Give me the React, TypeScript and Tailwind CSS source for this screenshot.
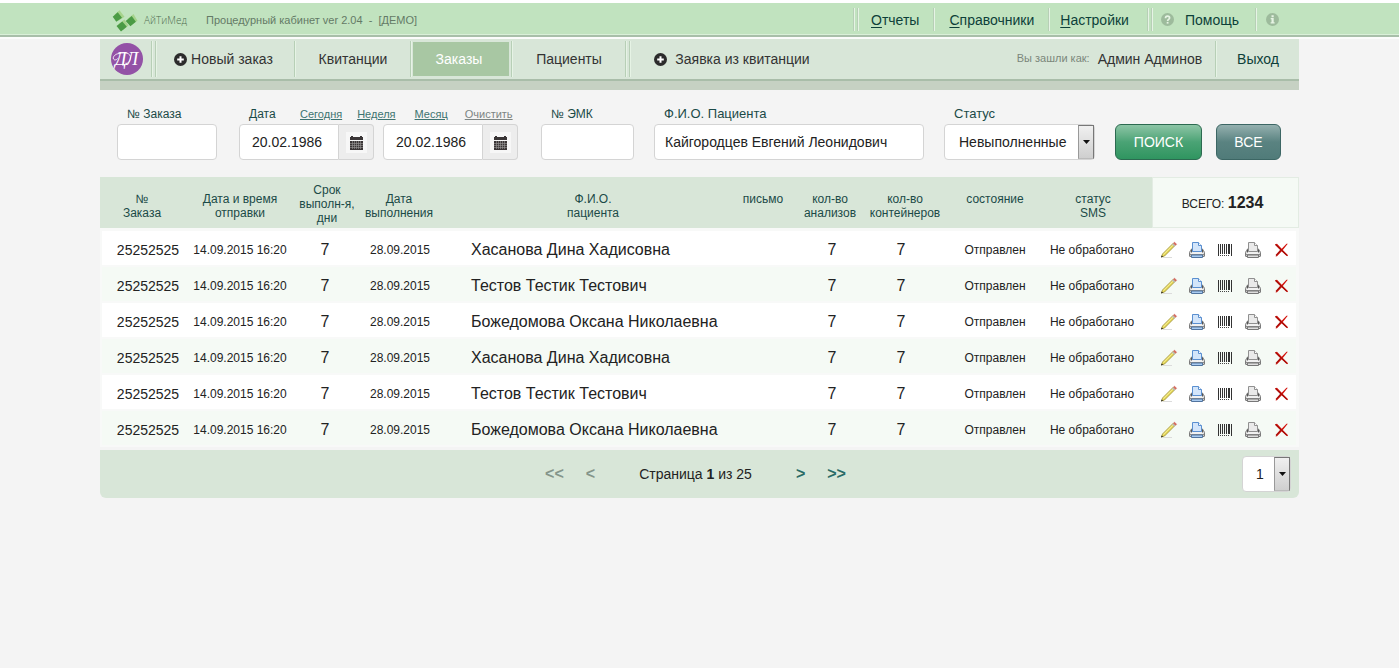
import { useState } from 'react';
import type { ReactNode } from 'react';
import { clsx } from 'clsx';

type Order = {
  id: number;
  number: string;
  sentAt: string;
  days: number;
  doneAt: string;
  patient: string;
  tests: number;
  containers: number;
  state: string;
  sms: string;
};

const patients = ['Хасанова Дина Хадисовна', 'Тестов Тестик Тестович', 'Божедомова Оксана Николаевна'];

const orders: Order[] = Array.from({ length: 6 }, (_, i) => ({
  id: i,
  number: '25252525',
  sentAt: '14.09.2015 16:20',
  days: 7,
  doneAt: '28.09.2015',
  patient: patients[i % 3],
  tests: 7,
  containers: 7,
  state: 'Отправлен',
  sms: 'Не обработано',
}));

function LogoIcon() {
  return (
    <svg width="26" height="22" viewBox="0 0 26 22" aria-hidden="true">
      <path d="M2.500 4.700 7.500.3l5 6.400-6 4zM15.500 9l6-5 4 6.700-6 4zM6.500 14l6-4.500 4 6-5.500 4.500z" fill="#a6d38c" />
      <path d="M.7 6.700 5.700 2.300l4.300 5.500-5.700 4zM13.700 11l6-5 4.200 5.700-5.500 4.500zM4.500 16l5.800-4.500 4.500 5.300L9 21.400z" fill="#4b9b45" />
    </svg>
  );
}

function Monogram() {
  return (
    <svg width="32" height="32" viewBox="0 0 32 32" aria-hidden="true">
      <circle cx="16" cy="16" r="16" fill="#9352a6" />
      <text x="4" y="22" fill="#fff" fontSize="18" fontStyle="italic" fontFamily="Liberation Serif, serif">Д</text>
      <text x="15" y="22" fill="#fff" fontSize="18" fontStyle="italic" fontFamily="Liberation Serif, serif">Л</text>
      <path d="M8 10.500C4 11 1.500 14 2.500 16c.8 1.500 3 1 4-.5M8 10.500c6-1.500 12-.5 11.500 4.500-.4 4-4 7-8.500 7" fill="none" stroke="#fff" strokeWidth=".9" />
    </svg>
  );
}

function PlusIcon() {
  return (
    <svg width="13" height="13" viewBox="0 0 13 13" aria-hidden="true">
      <circle cx="6.5" cy="6.5" r="6.5" fill="#2b2b2b" />
      <path d="M6.5 3.2v6.6M3.2 6.5h6.6" stroke="#fff" strokeWidth="2" />
    </svg>
  );
}

function HelpIcon() {
  return (
    <svg width="13" height="13" viewBox="0 0 13 13" aria-hidden="true">
      <circle cx="6.5" cy="6.5" r="6.5" fill="#9dbb9c" />
      <path d="M4.5 5.2c0-2.8 4.1-2.6 4.1-.2 0 1.5-2 1.3-2 3" fill="none" stroke="#e6f4e4" strokeWidth="1.7" />
      <path d="M5.7 8.9h1.8v1.7H5.7z" fill="#e6f4e4" />
    </svg>
  );
}

function InfoIcon() {
  return (
    <svg width="13" height="13" viewBox="0 0 13 13" aria-hidden="true">
      <circle cx="6.5" cy="6.5" r="6.5" fill="#9dbb9c" />
      <path d="M5.5 2.200h2.200v2H5.500zM4.700 5h3v4.300h.9v1.300H4.600V9.300h.9V6.200h-.8z" fill="#e6f4e4" />
    </svg>
  );
}

function CalendarIcon() {
  return (
    <svg width="21" height="21" viewBox="0 0 21 21" aria-hidden="true">
      <path d="M0 0h21v21H0z" fill="#f7f7f7" />
      <path d="M4 5h13v3H4zM5 4h2v2H5zM14 4h2v2h-2z" fill="#3a3536" />
      <path d="M4 9h13v9H4z" fill="#3a3536" />
      <path d="M4 11.500h13M4 13.500h13M4 15.500h13M6.500 9v8M8.500 9v8M10.500 9v8M12.500 9v8M14.500 9v8" stroke="#9b9899" strokeWidth=".6" />
    </svg>
  );
}

function PencilIcon() {
  return (
    <svg width="18" height="18" viewBox="0 0 18 18" aria-hidden="true">
      <path d="M3 16.500h9" stroke="#dcdcdc" />
      <path d="m1.500 16 1-3L13 2.500l2 2L4.500 15z" fill="#e9dc5c" stroke="#98892f" strokeWidth=".8" />
      <path d="M3.300 13.500 13.500 3.300" stroke="#f9f3a8" strokeWidth=".8" />
      <path d="m12.500 3 2.200 2.200" stroke="#b9b9b9" strokeWidth="1.400" />
      <path d="m13.500 2 1-.8 2 2-.9 1z" fill="#e0645a" stroke="#c1544b" strokeWidth=".6" />
      <path d="m1 16.500.7-2 1.400 1.300z" fill="#222" />
    </svg>
  );
}

function PrinterIcon({ blue }: { blue?: boolean }) {
  const edge = blue ? '#5a8fd0' : '#909090';
  return (
    <svg width="16" height="16" viewBox="0 0 16 16" aria-hidden="true">
      <path d="M1.500 8.500 3 6.500h10l1.500 2 1 2v3.500q0 .5-.5.5H1q-.5 0-.5-.5v-3.500z" fill="#c9c9c9" stroke="#7b7b7b" />
      <path d="M3.500 9.500v-9h6l3 3v6z" fill={blue ? '#d3e5fa' : '#eaeaea'} stroke={edge} />
      <path d="M9.500.5v3h3" fill="#fff" stroke={edge} />
      <path d="M1.500 10h13v2h-13z" fill="#f1f1f1" />
      <path d="M2.500 7.500v3M13.500 7.500v3" stroke="#555" />
      <path d="M1 12.500h14" stroke="#8c8c8c" />
      <path d="M2.500 13h11v2.500h-11z" fill={blue ? '#a9cbf0' : '#dedede'} stroke={blue ? '#51749f' : '#777'} />
    </svg>
  );
}

function BarcodeIcon() {
  return (
    <svg width="14" height="12" viewBox="0 0 14 12" aria-hidden="true">
      <path d="M0 0h1v12H0zM2 0h1v10H2zM4 0h1v10H4zM6 0h1v10H6zM8 0h1v10H8zM10 0h1v10h-1zM11 0h1v10h-1zM13 0h1v12h-1z" fill="#333" />
      <path d="M2 11h1v1H2zM4 11h1v1H4zM6 11h1v1H6zM8 11h1v1H8zM10 11h1v1h-1z" fill="#444" />
    </svg>
  );
}

function DeleteIcon() {
  return (
    <svg width="15" height="14" viewBox="0 0 15 14" aria-hidden="true">
      <path d="M1 1.200 3 .8l4.700 5L12.500.8h1.300L8.800 7l5.200 5.300-.5.9L7.800 8.200 3 13.200l-1.500.3L6.400 7z" fill="#d3130d" />
      <path d="m1.500 1.500 11.500 11M2 12.500l4.500-5" stroke="#a90d08" strokeWidth="1.200" />
    </svg>
  );
}

function Divider({ double }: { double?: boolean }) {
  return (
    <span className="flex gap-0.5 self-stretch" aria-hidden="true">
      <span className="w-0.5 border-l border-r border-l-[#b7cfb6] border-r-[#e6f3e5]" />
      {double && <span className="w-0.5 border-l border-r border-l-[#b7cfb6] border-r-[#e6f3e5]" />}
    </span>
  );
}

function TopLink({ text, className }: { text: string; className: string }) {
  return (
    <a href="#" className={clsx('text-sm text-[#0d3f39]', className)}>
      <span className="underline underline-offset-2">{text[0]}</span>
      {text.slice(1)}
    </a>
  );
}

function TopBar() {
  return (
    <header className="border-t-[3px] border-t-white bg-[#c1e3bf]">
      <div className="mx-auto flex h-[31px] w-full max-w-[1199px] items-center">
        <div className="flex items-center pt-1 pl-3">
          <LogoIcon />
          <span className="ml-1.5 w-[62px] font-['Open_Sans'] text-[10px] font-light text-[#4f6b50]">АйТиМед</span>
          <span className="text-[11px] whitespace-pre text-[#647a66]">Процедурный кабинет ver 2.04  -  [ДЕМО]</span>
        </div>
        <nav className="ml-auto flex items-center self-stretch pt-[5px] pr-5 pb-[3px]">
          <Divider double />
          <TopLink text="Отчеты" className="pr-[14px] pl-3" />
          <Divider />
          <TopLink text="Справочники" className="px-[14px]" />
          <Divider />
          <TopLink text="Настройки" className="pr-[18px] pl-2.5" />
          <Divider double />
          <a href="#" className="flex items-center gap-[11px] pr-4 pl-2 text-sm text-[#0d3f39]">
            <HelpIcon />
            Помощь
          </a>
          <Divider />
          <button type="button" aria-label="О программе" className="pl-[9px]">
            <InfoIcon />
          </button>
        </nav>
      </div>
      <div className="h-[3px] border-t border-b-2 border-t-[#d9f0d8] border-b-[#a8bfa9]" />
      <div className="h-0.5 bg-[#fbfcfb]" />
    </header>
  );
}

function MainNav() {
  return (
    <div className="border-b-[9px] border-[#c6d1c3]">
      <div className="flex h-[42px] items-stretch border-b-2 border-[#a9bda9] bg-[#d8e6d8] py-0.5 text-sm text-[#333]">
        <a href="#" aria-label="На главную" className="mr-2 ml-[11px] self-center">
          <Monogram />
        </a>
        <Divider double />
        <nav className="flex items-stretch">
          <a href="#" className="flex w-[137px] items-center justify-center gap-1 pr-1">
            <PlusIcon />
            Новый заказ
          </a>
          <Divider />
          <a href="#" className="flex w-[114px] items-center justify-center">Квитанции</a>
          <Divider />
          <a href="#" aria-current="page" className="my-px mr-0.5 ml-px flex w-[96px] items-center justify-center bg-[#a8c7a3] pr-1 text-white">
            Заказы
          </a>
          <Divider />
          <a href="#" className="flex w-[112px] items-center justify-center">Пациенты</a>
          <Divider double />
          <a href="#" className="flex w-[206px] items-center justify-center gap-2 pr-1">
            <PlusIcon />
            Заявка из квитанции
          </a>
        </nav>
        <div className="ml-auto flex items-center">
          <span className="mr-2 text-[11px] text-[#7b877b]">Вы зашли как:</span>
          <span className="mr-[13px]">Админ Админов</span>
          <Divider />
          <a href="#" className="px-5 text-[#0d3f39]">Выход</a>
        </div>
      </div>
    </div>
  );
}

const inputStyle = 'h-9 rounded border border-[#d4d4d4] bg-white text-sm text-[#222]';
const labelStyle = 'pl-2.5 leading-4 whitespace-nowrap text-[#1b4a47]';

function Field({ id, label, className, children }: { id: string; label: string; className: string; children: ReactNode }) {
  return (
    <div className={clsx('flex flex-col gap-0.5', className)}>
      <label htmlFor={id} className={labelStyle}>{label}</label>
      {children}
    </div>
  );
}

function DateInput({ id, label }: { id: string; label: string }) {
  return (
    <div className="flex">
      <input id={id} aria-label={label} defaultValue="20.02.1986" className="h-9 w-[100px] rounded-l border border-[#d4d4d4] bg-white pl-3 text-sm text-[#222]" />
      <button type="button" aria-label="Открыть календарь" className="flex h-9 w-[35px] items-center justify-center rounded-r border border-l-0 border-[#d4d4d4] bg-[#ededed]">
        <CalendarIcon />
      </button>
    </div>
  );
}

function SelectBox({ id, label, options, className }: { id: string; label?: string; options: string[]; className: string }) {
  return (
    <div className="relative">
      <select id={id} aria-label={label} className={clsx('appearance-none', inputStyle, className)}>
        {options.map((option) => (
          <option key={option}>{option}</option>
        ))}
      </select>
      <span className="pointer-events-none absolute inset-y-px right-px flex w-4 items-center justify-center border border-t-[#777] border-r-[#777] border-b-[#bbb] border-l-[#999] bg-linear-to-b from-[#f0f0f0] to-[#cfcfcf]">
        <svg width="7" height="4" viewBox="0 0 7 4" aria-hidden="true">
          <path d="M0 0h7L3.500 4z" fill="#111" />
        </svg>
      </span>
    </div>
  );
}

function Filters() {
  return (
    <form className="flex items-end gap-5 pt-4 pr-[18px] pb-[17px] pl-[17px]" onSubmit={(e) => e.preventDefault()}>
      <Field id="orderNo" label="№ Заказа" className="w-[100px] text-xs">
        <input id="orderNo" className={clsx(inputStyle, 'w-full px-2.5')} />
      </Field>

      <div className="mx-0.5 flex flex-col gap-0.5">
        <div className="flex items-center text-[11px] leading-4 text-[#3d7370]">
          <label htmlFor="dateFrom" className={clsx(labelStyle, 'w-[61px] text-xs')}>Дата</label>
          <button type="button" className="mr-[15px] underline">Сегодня</button>
          <button type="button" className="mr-[19px] underline">Неделя</button>
          <button type="button" className="mr-[17px] underline">Месяц</button>
          <button type="button" className="text-[#7d8583] underline">Очистить</button>
        </div>
        <div className="flex gap-[9px]">
          <DateInput id="dateFrom" label="Дата с" />
          <DateInput id="dateTo" label="Дата по" />
        </div>
      </div>

      <Field id="emk" label="№ ЭМК" className="ml-px w-[93px] text-xs">
        <input id="emk" className={clsx(inputStyle, 'w-full px-2.5')} />
      </Field>

      <Field id="patient" label="Ф.И.О. Пациента" className="min-w-0 flex-1 text-[13px]">
        <input id="patient" defaultValue="Кайгородцев Евгений Леонидович" className={clsx(inputStyle, 'w-full px-2.5')} />
      </Field>

      <Field id="status" label="Статус" className="w-[151px] text-[13px]">
        <SelectBox id="status" options={['Невыполненные', 'Выполненные']} className="w-full pr-5 pl-[14px]" />
      </Field>

      <div className="flex gap-[14px]">
        <button type="submit" className="h-9 w-[87px] rounded-md border border-[#2c6a50] bg-linear-to-b from-[#8cc5a6] via-[#4aa375] to-[#2f9560] text-sm text-white">
          ПОИСК
        </button>
        <button type="button" className="h-9 w-[65px] rounded-md border border-[#3c6664] bg-linear-to-b from-[#94b0af] via-[#5a8381] to-[#507b79] text-sm text-white">
          ВСЕ
        </button>
      </div>
    </form>
  );
}

const thStyle = 'h-[54px] border-b-[3px] border-[#f8f9f8] bg-[#d8e6d8] bg-clip-padding p-0 pt-[15px] align-top font-normal';

function OrdersTable() {
  return (
    <table className="w-full table-fixed border-separate border-spacing-0 text-xs whitespace-nowrap text-[#222]">
      <colgroup>
        <col className="w-[84px]" />
        <col className="w-[112px]" />
        <col className="w-[62px]" />
        <col className="w-[82px]" />
        <col />
        <col className="w-[66px]" />
        <col className="w-[68px]" />
        <col className="w-[82px]" />
        <col className="w-[98px]" />
        <col className="w-[108px]" />
        <col className="w-[147px]" />
      </colgroup>
      <thead className="text-xs leading-[14px] text-[#1b4a47]">
        <tr>
          <th className={thStyle}>№<br />Заказа</th>
          <th className={thStyle}>Дата и время<br />отправки</th>
          <th className="border-b-[3px] border-[#f8f9f8] bg-[#d8e6d8] bg-clip-padding p-0 pt-[6px] align-top font-normal">
            Срок<br />выполн-я,<br />дни
          </th>
          <th className={thStyle}>Дата<br />выполнения</th>
          <th className={clsx(thStyle, 'pl-4')}>Ф.И.О.<br />пациента</th>
          <th className={thStyle}>письмо</th>
          <th className={thStyle}>кол-во<br />анализов</th>
          <th className={thStyle}>кол-во<br />контейнеров</th>
          <th className={thStyle}>состояние</th>
          <th className={clsx(thStyle, 'pr-[10px]')}>статус<br />SMS</th>
          <th className="border-b-[3px] border-[#f8f9f8] bg-[#f5faf5] bg-clip-padding p-0 pr-1.5 align-middle font-normal text-[#222] shadow-[inset_0_0_0_1px_#e3ece3]">
            ВСЕГО: <b className="text-base">1234</b>
          </th>
        </tr>
      </thead>
      <tbody className="text-center [&_td]:h-9 [&_td]:border-b-2 [&_td]:border-[#f8f9f8] [&_td]:bg-clip-padding [&_td]:p-0 [&_td]:pt-[3px]">
        {orders.map((order, i) => (
          <tr key={order.id} className={i % 2 ? '[&>td]:bg-[#f5faf5]' : '[&>td]:bg-white'}>
            <td className="border-l-2">
              <span className="pl-2.5 text-sm">{order.number}</span>
            </td>
            <td>{order.sentAt}</td>
            <td>
              <span className="pr-1 text-base">{order.days}</span>
            </td>
            <td>
              <span className="pl-0.5">{order.doneAt}</span>
            </td>
            <td className="text-left">
              <span className="pl-[31px] text-base">{order.patient}</span>
            </td>
            <td />
            <td>
              <span className="pl-1 text-base">{order.tests}</span>
            </td>
            <td>
              <span className="pr-2 text-base">{order.containers}</span>
            </td>
            <td>{order.state}</td>
            <td>
              <span className="pr-3">{order.sms}</span>
            </td>
            <td className="border-r-[3px]">
              <div className="flex items-center pl-[3px] [&>button]:flex [&>button]:w-7 [&>button]:justify-center">
                <button type="button" aria-label="Редактировать"><PencilIcon /></button>
                <button type="button" aria-label="Печать заказа"><PrinterIcon blue /></button>
                <button type="button" aria-label="Штрихкод"><BarcodeIcon /></button>
                <button type="button" aria-label="Печать"><PrinterIcon /></button>
                <button type="button" aria-label="Удалить"><DeleteIcon /></button>
              </div>
            </td>
          </tr>
        ))}
      </tbody>
    </table>
  );
}

function Pager() {
  const [page, setPage] = useState(1);
  const total = 25;
  const back = clsx('text-base font-bold', page > 1 ? 'text-[#2a6b66]' : 'text-[#84958a]');
  const forward = clsx('text-base font-bold', page < total ? 'text-[#2a6b66]' : 'text-[#84958a]');

  return (
    <div className="mt-[3px] grid h-12 grid-cols-[1fr_auto_1fr] items-center rounded-b-md bg-[#d8e6d8] pr-2 text-sm text-[#222]">
      <span />
      <div className="flex items-center">
        <button type="button" aria-label="Первая" className={clsx(back, 'mr-[22px]')} onClick={() => setPage(1)}>&lt;&lt;</button>
        <button type="button" aria-label="Назад" className={clsx(back, 'mr-11')} onClick={() => setPage(Math.max(1, page - 1))}>&lt;</button>
        <span>Страница <b>{page}</b> из {total}</span>
        <button type="button" aria-label="Вперёд" className={clsx(forward, 'ml-11')} onClick={() => setPage(Math.min(total, page + 1))}>&gt;</button>
        <button type="button" aria-label="Последняя" className={clsx(forward, 'ml-[22px]')} onClick={() => setPage(total)}>&gt;&gt;</button>
      </div>
      <div className="justify-self-end">
        <SelectBox id="page" label="Страница" options={['1', '2', '3']} className="w-[49px] pl-[13px]" />
      </div>
    </div>
  );
}

export default function App() {
  return (
    <div className="min-h-screen bg-[#f4f4f4] font-['Liberation_Sans',Arial,sans-serif]">
      <TopBar />
      <main className="mx-auto w-full max-w-[1199px]">
        <MainNav />
        <Filters />
        <OrdersTable />
        <Pager />
      </main>
    </div>
  );
}
